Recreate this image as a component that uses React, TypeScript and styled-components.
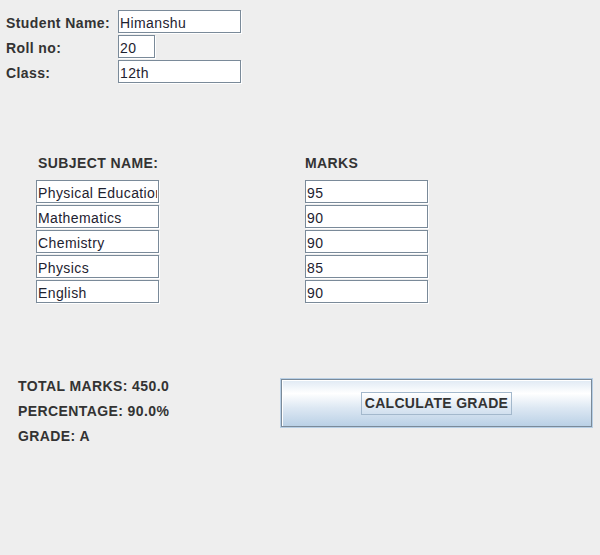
import React from "react";
import styled, { createGlobalStyle } from "styled-components";

const GlobalStyle = createGlobalStyle`
  html, body {
    margin: 0;
    padding: 0;
    background: #eeeeee;
  }
  body {
    font-family: "Liberation Sans", Arial, sans-serif;
  }
`;

const Page = styled.div`
  width: 600px;
  height: 555px;
  box-sizing: border-box;
  padding-top: 10px;
  background: #eeeeee;
  overflow: hidden;
`;

const InfoForm = styled.div`
  display: grid;
  grid-template-columns: 112px auto;
  grid-auto-rows: 24px;
  row-gap: 1px;
  margin-left: 6px;
`;

const Label = styled.span`
  display: flex;
  align-items: center;
  font-size: 14px;
  font-weight: bold;
  letter-spacing: 0.4px;
  color: #333333;
  white-space: nowrap;
  padding-top: 2px;
`;

const Field = styled.input<{ $w: number }>`
  box-sizing: border-box;
  width: ${(p) => p.$w}px;
  height: 23px;
  margin: 0;
  padding: 3px 1px 0 1px;
  border: 1px solid #7a8a99;
  box-shadow: 1px 1px 0 #ffffff, inset 1px 1px 0 #ffffff;
  background: #ffffff;
  font-family: "Liberation Sans", Arial, sans-serif;
  font-size: 14px;
  letter-spacing: 0.4px;
  color: #1e2230;
  outline: none;
`;

const MarksSection = styled.div`
  display: grid;
  grid-template-columns: 269px auto;
  grid-template-rows: 28px repeat(5, 24px);
  row-gap: 1px;
  margin-top: 67px;
  margin-left: 36px;
`;

const ColumnHeader = styled(Label)`
  align-items: flex-start;
  height: 24px;
  align-self: start;
  box-sizing: border-box;
  padding-top: 4px;
  padding-left: 2px;
`;

const MarksHeader = styled(ColumnHeader)`
  padding-left: 0;
`;

const ResultSection = styled.div`
  display: grid;
  grid-template-columns: 262px 313px;
  margin-top: 69px;
  margin-left: 18px;
`;

const ResultList = styled.div`
  display: grid;
  grid-auto-rows: 24px;
  row-gap: 1px;
`;

const CalcButton = styled.button`
  box-sizing: border-box;
  width: 313px;
  height: 50px;
  margin: 5px 0 0 0;
  padding: 0;
  border: 1px solid #b8cfe5;
  box-shadow: inset 0 0 0 1px #7a8a99, inset 2px 2px 0 #ffffff;
  background: linear-gradient(
    to bottom,
    #dde8f3 0%,
    #ffffff 30%,
    #dde8f3 60%,
    #b8cfe5 100%
  );
  display: flex;
  align-items: center;
  justify-content: center;
  cursor: pointer;
`;

const FocusRing = styled.span`
  box-sizing: border-box;
  display: inline-block;
  height: 23px;
  padding: 0 3px;
  line-height: 21px;
  border: 1px solid #a3b8cc;
  font-family: "Liberation Sans", Arial, sans-serif;
  font-size: 14px;
  font-weight: bold;
  letter-spacing: 0.3px;
  color: #333333;
`;

const subjects = [
  { name: "Physical Education", mark: "95" },
  { name: "Mathematics", mark: "90" },
  { name: "Chemistry", mark: "90" },
  { name: "Physics", mark: "85" },
  { name: "English", mark: "90" },
];

export default function App() {
  return (
    <>
      <GlobalStyle />
      <Page>
        <InfoForm>
          <Label>Student Name:</Label>
          <Field $w={123} defaultValue="Himanshu" readOnly />
          <Label>Roll no:</Label>
          <Field $w={37} defaultValue="20" readOnly />
          <Label>Class:</Label>
          <Field $w={123} defaultValue="12th" readOnly />
        </InfoForm>

        <MarksSection>
          <ColumnHeader>SUBJECT NAME:</ColumnHeader>
          <MarksHeader>MARKS</MarksHeader>
          {subjects.map((s) => (
            <React.Fragment key={s.name}>
              <Field $w={123} defaultValue={s.name} readOnly />
              <Field $w={123} defaultValue={s.mark} readOnly />
            </React.Fragment>
          ))}
        </MarksSection>

        <ResultSection>
          <ResultList>
            <Label>TOTAL MARKS: 450.0</Label>
            <Label>PERCENTAGE: 90.0%</Label>
            <Label>GRADE: A</Label>
          </ResultList>
          <CalcButton type="button">
            <FocusRing>CALCULATE GRADE</FocusRing>
          </CalcButton>
        </ResultSection>
      </Page>
    </>
  );
}
